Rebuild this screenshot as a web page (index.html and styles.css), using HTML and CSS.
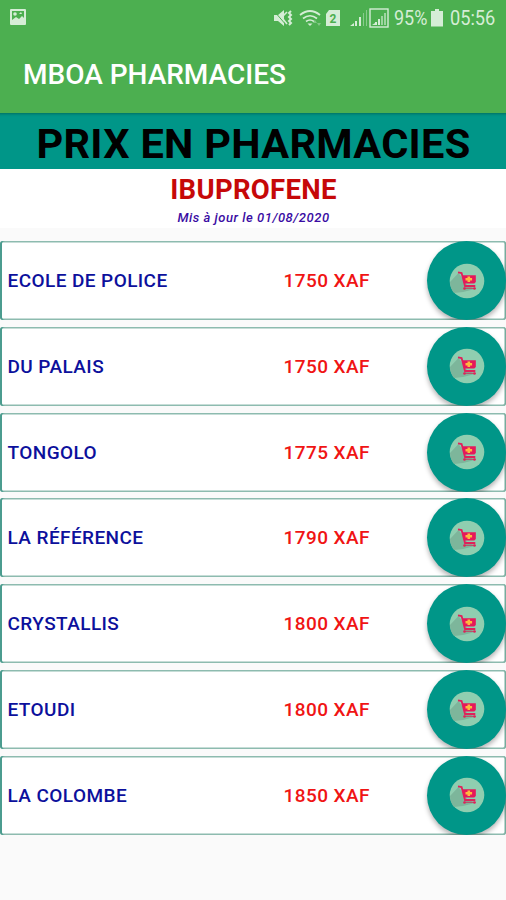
FILE: index.html
```html
<!DOCTYPE html>
<html lang="fr">
<head>
  <meta charset="UTF-8">
  <title>MBOA PHARMACIES</title>
  <link rel="stylesheet" href="styles.css">
</head>
<body>
  <svg width="0" height="0" class="defs">
    <symbol id="cart" viewBox="0 0 36 36">
      <circle cx="18" cy="18" r="17.3" fill="#8fceb0"/>
      <path d="M9.500 10L18 22l8 4-12 3-9 1A17.300 17.300 0 0 1 1 19Z" fill="#7db69b"/>
      <path d="M9 9.300l3.600 .8 3.400 12.900h10.300" fill="none" stroke="#e0205a" stroke-width="1.800"/>
      <path d="M13.500 12.300h13.300v6.700l-1.500 1.500H15Z" fill="#e5185a"/>
      <path d="M15 25.300h11.500" stroke="#c2385a" stroke-width="1.100"/>
      <circle cx="15.500" cy="25.500" r="1.300" fill="#e0205a"/>
      <circle cx="25.500" cy="25.500" r="1.300" fill="#e0205a"/>
      <path d="M18.500 13.500h2.600v1.500h2v2.600h-2v1.500h-2.600v-1.500h-2v-2.600h2Z" fill="#ffb83e"/>
    </symbol>
  </svg>

  <header>
    <div class="status">
      <svg class="photo" width="18" height="18" viewBox="0 0 18 18">
        <rect x="1" y="1" width="16" height="16" rx="1" fill="#d5edd6"/>
        <path d="M3 3h12v7l-2-2-3 3-3-2-4 3Z" fill="#4caf50"/>
        <circle cx="6" cy="6" r="1.8" fill="#d5edd6"/>
        <path d="M10 6l2-2 1 2Z" fill="#d5edd6"/>
      </svg>
      <svg width="120" height="24" viewBox="0 0 120 24" fill="#d5edd6">
        <!-- muted, vibrate -->
        <path d="M1 9h4l6-5v16l-6-5H1Z"/>
        <path d="M1 5l13 15" stroke="#4caf50" stroke-width="1"/>
        <path d="M10 10l4-4M10 13l4 5" stroke="#d5edd6" stroke-width="1.6"/>
        <path d="M18 5l-2 2 2 2-2 2 2 2-2 2 2 2-2 2" fill="none" stroke="#d5edd6" stroke-width="2"/>
        <!-- wifi -->
        <g fill="none" stroke="#d5edd6" stroke-width="1.7">
          <path d="M27 9q10-8 20 0M30 12.5q7-5.500 14 0M33 15.500q4-3 8 0"/>
        </g>
        <path d="M34.500 17.500h5L37 20Z"/>
        <path d="M42 14l2 3h-4ZM46 20l-2-3h4Z" opacity=".4"/>
        <!-- sim 2 -->
        <path d="M56 4h11v16H53V8Z"/>
        <text x="60" y="16.500" class="sim">2</text>
        <!-- signal -->
        <path d="M77 20l4-3v3ZM82 15h2v5h-2ZM86 11h2v9h-2Z"/>
        <path d="M90 7h1v13h-1ZM93 4h1v16h-1Z" opacity=".45"/>
        <rect x="97" y="3" width="18" height="18" fill="none" stroke="#d5edd6" stroke-width="1.400"/>
        <path d="M99 19l3-2v2ZM102 16h2v3h-2ZM105 13h2v6h-2Z"/>
        <path d="M108 10h2v9h-2ZM111 7h2v12h-2Z" opacity=".6"/>
      </svg>
      <span class="percent">95%</span>
      <svg class="battery" width="12" height="20" viewBox="0 0 12 20">
        <path d="M4 1h4v2h4v15.500H0V3h4Z" fill="#d5edd6"/>
      </svg>
      <span class="clock">05:56</span>
    </div>
    <h1>MBOA PHARMACIES</h1>
  </header>

  <h2>PRIX EN PHARMACIES</h2>
  <div class="product">
    <h3>IBUPROFENE</h3>
    <p>Mis à jour le 01/08/2020</p>
  </div>

  <div class="list">
    <div class="row">
      <span class="name">ECOLE DE POLICE</span><span class="price">1750 XAF</span>
      <button><svg><use href="#cart"/></svg></button>
    </div>
    <div class="row">
      <span class="name">DU PALAIS</span><span class="price">1750 XAF</span>
      <button><svg><use href="#cart"/></svg></button>
    </div>
    <div class="row">
      <span class="name">TONGOLO</span><span class="price">1775 XAF</span>
      <button><svg><use href="#cart"/></svg></button>
    </div>
    <div class="row">
      <span class="name">LA RÉFÉRENCE</span><span class="price">1790 XAF</span>
      <button><svg><use href="#cart"/></svg></button>
    </div>
    <div class="row">
      <span class="name">CRYSTALLIS</span><span class="price">1800 XAF</span>
      <button><svg><use href="#cart"/></svg></button>
    </div>
    <div class="row">
      <span class="name">ETOUDI</span><span class="price">1800 XAF</span>
      <button><svg><use href="#cart"/></svg></button>
    </div>
    <div class="row">
      <span class="name">LA COLOMBE</span><span class="price">1850 XAF</span>
      <button><svg><use href="#cart"/></svg></button>
    </div>
  </div>
</body>
</html>
```

FILE: styles.css
```css
* {
  box-sizing: border-box;
}
body {
  margin: 0;
  height: 900px;
  overflow: hidden;
  background-color: #fafafa;
  font-family: Roboto, sans-serif;
  white-space: nowrap;
}
h1, h2, h3, p {
  margin: 0;
}
.defs {
  display: block;
}
header {
  height: 113px;
  background-color: #4caf50;
}
.status {
  display: flex;
  align-items: center;
  height: 36px;
  padding: 0 10px 0 9px;
  color: #d5edd6;
  font-size: 20px;
}
.photo {
  margin: 0 auto 2px 0;
}
.percent {
  width: 34px;
  margin-left: 1px;
  transform: scaleX(0.9);
  transform-origin: left;
}
.battery {
  margin: 0 7px 0 3px;
}
.clock {
  width: 46px;
  transform: scaleX(0.91);
  transform-origin: left;
}
.sim {
  font-size: 12px;
  font-weight: bold;
  text-anchor: middle;
  fill: #4caf50;
}
h1 {
  padding-left: 23px;
  line-height: 78px;
  font-size: 28px;
  font-weight: 500;
  color: white;
}
h2 {
  height: 56px;
  padding-left: 1px;
  background-color: #009688;
  box-shadow: inset 0 4px 3px -3px #006c60;
  text-align: center;
  line-height: 61px;
  font-size: 41.5px;
  font-weight: bold;
  letter-spacing: 0.3px;
  color: black;
}
.product {
  height: 59px;
  background-color: white;
  text-align: center;
}
h3 {
  padding-left: 1px;
  line-height: 42px;
  font-size: 27.5px;
  font-weight: bold;
  letter-spacing: 0.3px;
  color: #c60808;
}
p {
  padding-left: 1px;
  line-height: 14px;
  font-size: 13px;
  font-weight: 500;
  font-style: italic;
  letter-spacing: 0.54px;
  color: #3a0ca3;
}
.list {
  display: flex;
  flex-direction: column;
  gap: 6.8px;
  padding-top: 13px;
}
.row {
  display: flex;
  align-items: center;
  height: 79px;
  padding-left: 7.5px;
  overflow: hidden;
  background-color: white;
  box-shadow: inset 2px 0 #4b9c8f, inset -1px 0 #77ab9d, inset 0 0 0 1.6px #8dbbaf;
  border-radius: 3px;
  font-size: 19px;
  font-weight: 500;
}
.name {
  width: 276px;
  letter-spacing: 0.42px;
  color: #0c109c;
}
.price {
  width: 143.5px;
  letter-spacing: 0.42px;
  color: #f01414;
}
button {
  display: flex;
  align-items: center;
  justify-content: center;
  flex: none;
  width: 79px;
  height: 79px;
  padding: 0;
  border: none;
  border-radius: 50%;
  background-color: #009688;
  box-shadow: 0 3px 5px rgba(0, 0, 0, 0.3);
}
button svg {
  width: 36px;
  height: 36px;
}
```
